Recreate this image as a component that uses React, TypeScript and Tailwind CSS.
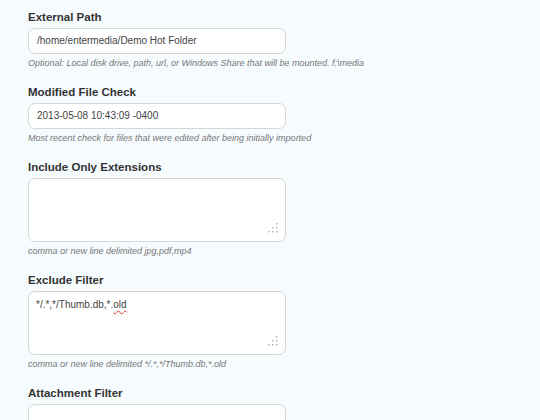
const fontStack = "font-['Liberation_Sans',Arial,sans-serif]";

function Grip() {
  return (
    <svg className="absolute right-[7px] bottom-[8px]" width="10" height="10" viewBox="0 0 10 10">
      <rect x="8" y="0" width="1.4" height="1.4" fill="#a8a8a8" />
      <rect x="4" y="4" width="1.4" height="1.4" fill="#a8a8a8" />
      <rect x="8" y="4" width="1.4" height="1.4" fill="#a8a8a8" />
      <rect x="0" y="8" width="1.4" height="1.4" fill="#a8a8a8" />
      <rect x="4" y="8" width="1.4" height="1.4" fill="#a8a8a8" />
      <rect x="8" y="8" width="1.4" height="1.4" fill="#a8a8a8" />
    </svg>
  );
}

function Label({ children }: { children: React.ReactNode }) {
  return <div className="h-[18px] leading-[18px] text-[11.5px] font-bold text-[#333]">{children}</div>;
}

function Help({ children }: { children: React.ReactNode }) {
  return <div className="mt-[3px] h-[13px] leading-[13px] text-[9px] italic text-[#777]">{children}</div>;
}

function TextInput({ value }: { value: string }) {
  return (
    <div className="mt-[2px] h-[26px] w-[258px] rounded-[7px] border border-[#d6d6d6] bg-white px-[8px] text-[10px] leading-[24px] text-[#444]">
      {value}
    </div>
  );
}

function TextArea({ children }: { children?: React.ReactNode }) {
  return (
    <div className="relative mt-[2px] h-[64px] w-[258px] rounded-[7px] border border-[#d6d6d6] bg-white px-[7px] pt-[6px] text-[10px] leading-[13px] text-[#444]">
      {children}
      <Grip />
    </div>
  );
}

export default function App() {
  return (
    <div className={`min-h-[420px] w-[540px] bg-[#f6fbfe] ${fontStack} pl-[28px] pt-[8px]`}>
      <div className="flex flex-col gap-[13px]">
        <div>
          <Label>External Path</Label>
          <TextInput value="/home/entermedia/Demo Hot Folder" />
          <Help>Optional: Local disk drive, path, url, or Windows Share that will be mounted. f:\media</Help>
        </div>
        <div>
          <Label>Modified File Check</Label>
          <TextInput value="2013-05-08 10:43:09 -0400" />
          <Help>Most recent check for files that were edited after being initially imported</Help>
        </div>
        <div>
          <Label>Include Only Extensions</Label>
          <TextArea />
          <Help>comma or new line delimited jpg,pdf,mp4</Help>
        </div>
        <div>
          <Label>Exclude Filter</Label>
          <TextArea>
            */.*,*/Thumb.db,*.
            <span className="underline decoration-wavy decoration-[#e03030] decoration-1 underline-offset-2">old</span>
          </TextArea>
          <Help>comma or new line delimited */.*,*/Thumb.db,*.old</Help>
        </div>
        <div>
          <Label>Attachment Filter</Label>
          <TextArea />
        </div>
      </div>
    </div>
  );
}
